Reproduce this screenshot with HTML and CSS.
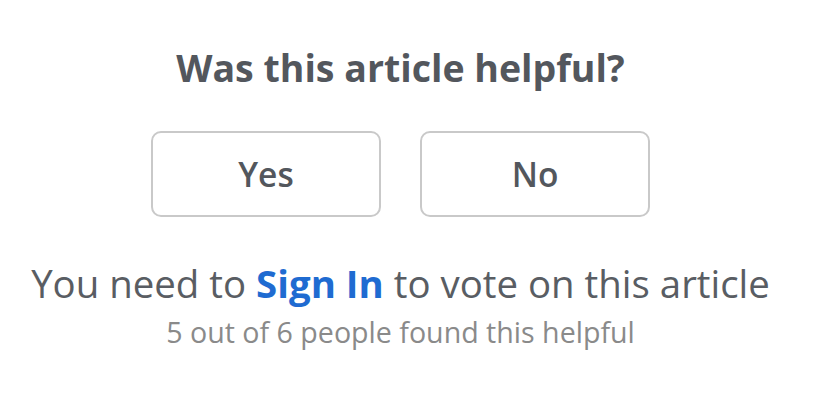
FILE: index.html
```html
<!DOCTYPE html>
<html lang="en">
<head>
    <meta charset="UTF-8">
    <title>Article feedback</title>
    <link rel="stylesheet" href="styles.css">
</head>
<body>
    <div class="feedback">
        <h2 class="title">Was this article helpful?</h2>
        <div class="votes">
            <button class="vote">Yes</button>
            <button class="vote">No</button>
        </div>
        <p class="signin">You need to <a href="#">Sign In</a> to vote on this article</p>
        <p class="count">5 out of 6 people found this helpful</p>
    </div>
</body>
</html>
```

FILE: styles.css
```css
body {
    margin: 0;
    background-color: #fff;
    font-family: "Open Sans", sans-serif;
}
.feedback {
    width: 801px;
    display: flex;
    flex-direction: column;
    align-items: center;
    padding-top: 43px;
}
.title {
    margin: 0;
    font-size: 37.5px;
    font-weight: 700;
    color: #53575d;
    line-height: 50px;
}
.votes {
    display: flex;
    gap: 39px;
    margin-top: 38px;
}
.vote {
    width: 230px;
    height: 86px;
    background: #fff;
    border: 2px solid #c9c9c9;
    border-radius: 10px;
    font-family: "Open Sans", sans-serif;
    font-size: 33.5px;
    font-weight: 600;
    color: #53575d;
}
.signin {
    margin: 43px 0 0;
    font-size: 38.4px;
    color: #595d63;
    line-height: 46px;
}
.signin a {
    color: #1f6bd1;
    font-weight: 700;
    text-decoration: none;
}
.count {
    margin: 8px 0 0;
    font-size: 28.6px;
    color: #8a8a8a;
    line-height: 36px;
}
```
